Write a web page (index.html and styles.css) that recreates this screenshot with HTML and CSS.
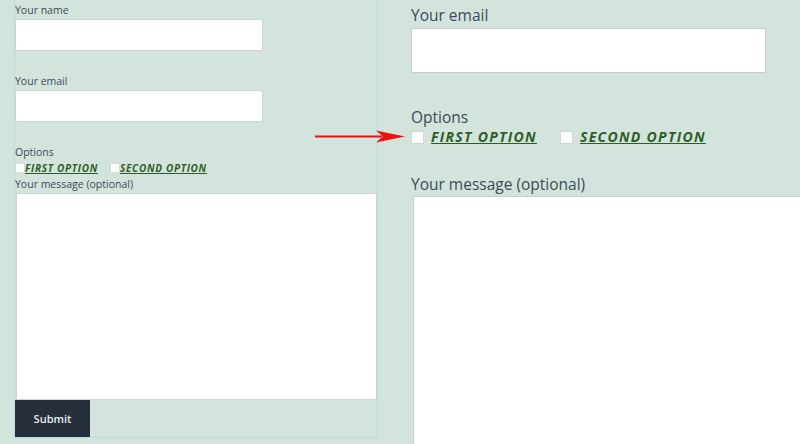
FILE: index.html
```html
<!DOCTYPE html>
<html>
<head>
<meta charset="utf-8">
<link rel="stylesheet" href="styles.css">
</head>
<body>
<div class="page">
  <div class="left">
    <form class="form-small">
      <label class="lbl first">Your name</label>
      <input class="field" type="text">
      <label class="lbl">Your email</label>
      <input class="field" type="email">
      <label class="lbl">Options</label>
      <div class="opts">
        <span class="opt"><input class="cb" type="checkbox"><span class="opt-text">First option</span></span>
        <span class="opt"><input class="cb" type="checkbox"><span class="opt-text">Second option</span></span>
      </div>
      <label class="lbl msg">Your message (optional)</label>
      <textarea class="area"></textarea>
      <button class="submit" type="button">Submit</button>
    </form>
  </div>
  <div class="right">
    <div class="zoom">
      <label class="zlbl zfirst">Your email</label>
      <input class="zfield" type="email">
      <label class="zlbl zopt-lbl">Options</label>
      <div class="zopts">
        <span class="zopt"><input class="zcb" type="checkbox"><span class="zopt-text">First option</span></span>
        <span class="zopt"><input class="zcb" type="checkbox"><span class="zopt-text">Second option</span></span>
      </div>
      <label class="zlbl zmsg">Your message (optional)</label>
      <textarea class="zarea"></textarea>
    </div>
  </div>
  <svg class="arrow" width="100" height="20" viewBox="0 0 100 20">
    <line x1="3" y1="9.5" x2="70" y2="9.5" stroke="#ee1111" stroke-width="2"/>
    <path d="M64,3.5 L93,9.5 L64,15.5 L71,9.5 Z" fill="#ee1111"/>
  </svg>
</div>
</body>
</html>
```
FILE: styles.css
```css
html, body {
  margin: 0;
  padding: 0;
}
body {
  background: #d3e4dc;
  font-family: "Open Sans", "Noto Sans", sans-serif;
  color: #3d4a5a;
  overflow: hidden;
}
.page {
  position: relative;
  display: flex;
  width: 800px;
  height: 444px;
  overflow: hidden;
}
.left {
  width: 378px;
  flex: none;
  padding-left: 14px;
  box-sizing: border-box;
}
.form-small {
  margin: 0;
  width: 364px;
  box-sizing: border-box;
  border: 1px solid #b3dfe9;
  border-top: none;
  display: flex;
  flex-direction: column;
  align-items: flex-start;
}
.lbl {
  display: block;
  font-size: 10.5px;
  line-height: 15px;
  height: 15px;
  margin-bottom: 1px;
}
.lbl.first {
  margin-top: 3px;
}
.field {
  display: block;
  width: 248px;
  height: 32px;
  box-sizing: border-box;
  border: 1px solid #cfd3d1;
  background: #fff;
  margin: 0 0 23px 0;
  padding: 0;
}
.opts {
  display: flex;
  align-items: center;
  height: 14px;
  gap: 12px;
}
.opt {
  display: flex;
  align-items: center;
}
.cb {
  appearance: none;
  -webkit-appearance: none;
  width: 10px;
  height: 10px;
  margin: 0;
  box-sizing: border-box;
  background: #fff;
  border: 1px solid #d6dad8;
  border-radius: 0;
}
.opt-text {
  font-size: 10px;
  font-weight: 700;
  font-style: italic;
  text-transform: uppercase;
  letter-spacing: 0.7px;
  color: #2e5c28;
  text-decoration: underline;
  line-height: 12px;
}
.lbl.msg {
  margin-top: 2px;
  margin-bottom: 1px;
}
.area {
  display: block;
  width: 361px;
  height: 207px;
  box-sizing: border-box;
  margin: 0 0 0 1px;
  border: 1px solid #cfd3d1;
  background: #fff;
  resize: none;
  padding: 0;
}
.submit {
  display: block;
  width: 75px;
  height: 37px;
  margin: 0;
  border: none;
  background: #272f3c;
  color: #e8eef0;
  font-family: "Open Sans", "Noto Sans", sans-serif;
  font-size: 11px;
  font-weight: 600;
  padding: 0;
}
.right {
  flex: 1;
  overflow: hidden;
  padding-left: 33px;
  box-sizing: border-box;
}
.zoom {
  display: flex;
  flex-direction: column;
  align-items: flex-start;
}
.zlbl {
  display: block;
  font-size: 15.5px;
  line-height: 22px;
  height: 22px;
  margin-bottom: 2px;
}
.zlbl.zfirst {
  margin-top: 4px;
}
.zfield {
  display: block;
  width: 355px;
  height: 45px;
  box-sizing: border-box;
  border: 1px solid #c9cecc;
  background: #fff;
  margin: 0;
  padding: 0;
}
.zlbl.zopt-lbl {
  margin-top: 33px;
  margin-bottom: 0;
}
.zopts {
  display: flex;
  align-items: center;
  height: 18px;
  gap: 23px;
}
.zopt {
  display: flex;
  align-items: center;
  gap: 7px;
}
.zcb {
  appearance: none;
  -webkit-appearance: none;
  width: 13px;
  height: 13px;
  margin: 0;
  box-sizing: border-box;
  background: #fff;
  border: 1px solid #d0d5d3;
  border-radius: 0;
}
.zopt-text {
  font-size: 14px;
  font-weight: 700;
  font-style: italic;
  text-transform: uppercase;
  letter-spacing: 1.3px;
  color: #2e5c28;
  text-decoration: underline;
  line-height: 16px;
}
.zlbl.zmsg {
  margin-top: 27px;
  margin-bottom: 1px;
}
.zarea {
  display: block;
  width: 420px;
  height: 300px;
  box-sizing: border-box;
  margin: 0 0 0 2px;
  border: 1px solid #c9cecc;
  background: #fff;
  resize: none;
  padding: 0;
}
.arrow {
  position: absolute;
  left: 312px;
  top: 127px;
}
```
